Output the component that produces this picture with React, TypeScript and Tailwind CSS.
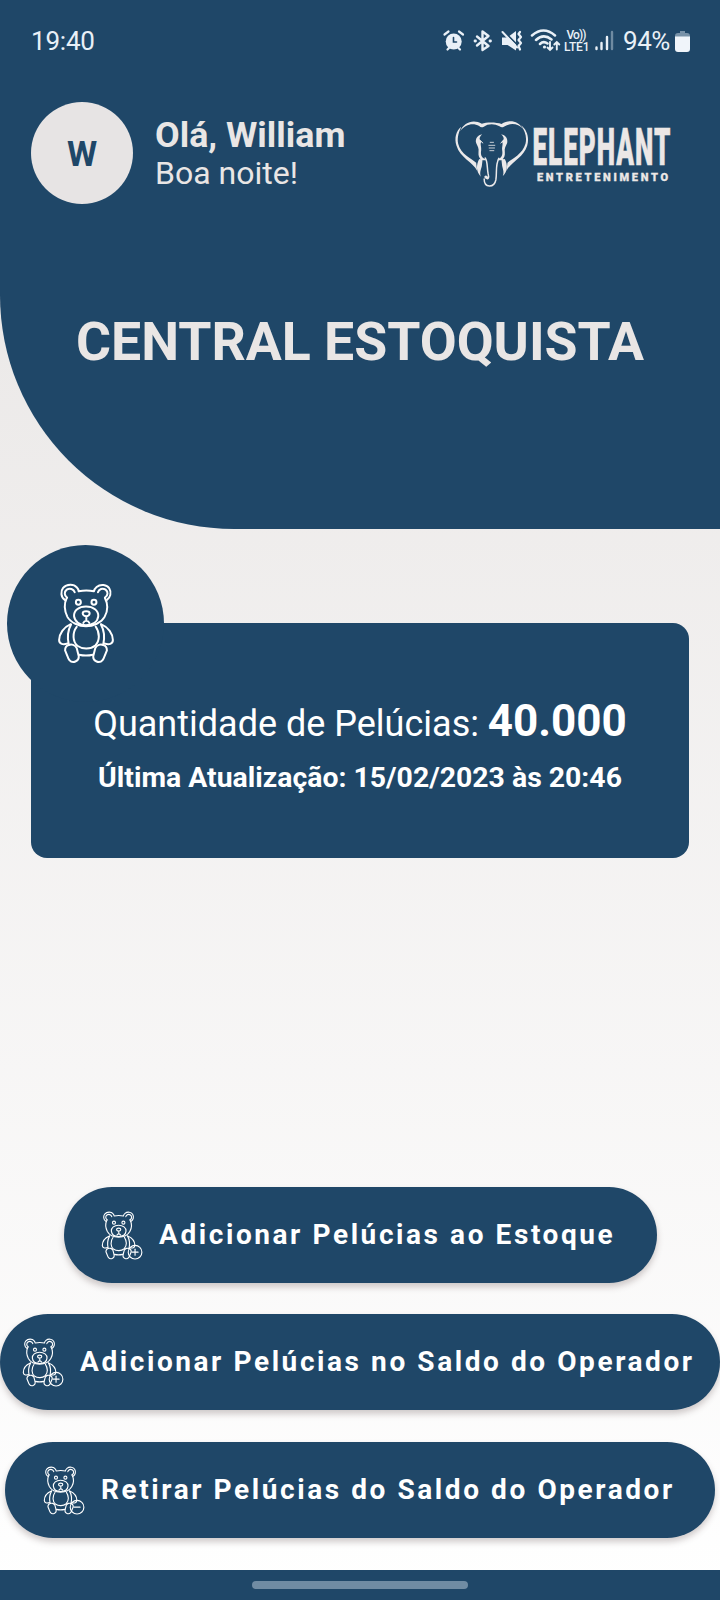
import type { ReactNode } from "react";

type Badge = "plus" | "minus";

function Bear({ badge, className, stroke }: { badge?: Badge; className: string; stroke: number }) {
  return (
    <svg
      viewBox={badge ? "170 158 208 244" : "170 158 174 244"}
      className={className}
      fill="none"
      stroke="#fff"
      strokeWidth={stroke}
      strokeLinecap="round"
      strokeLinejoin="round"
    >
      <path d="M193 209 C181 201 180 183 188 173 C199 160 221 161 229 171 Q234 176 235 183 C249 180 267 180 281 183 Q282 176 289 170 C301 160 320 163 327 174 C335 187 330 202 320 209" />
      <path d="M200 202 C191 196 191 184 199 178 C208 172 220 176 223 186" />
      <path d="M314 202 C324 196 324 184 316 178 C307 172 296 176 293 186" />
      <path d="M199 203 C190 222 193 244 201 260 C211 278 236 288 257 288 C279 288 303 278 313 260 C322 244 324 222 314 203" />
      <circle cx="234" cy="216" r="7.5" />
      <circle cx="281" cy="216" r="7.5" />
      <path d="M221 258 C220 241 235 229 257 229 C279 229 295 241 294 258 C292 275 277 285 257 285 C238 285 223 275 221 258 Z" />
      <path d="M247 249 C247 241 268 241 268 249 C268 255 262 258 258 258 C253 258 247 255 247 249 Z M258 258 V272 M249 278 Q252 272 258 272 Q264 272 267 278" />
      <path d="M211 282 C190 291 176 311 176 330 C176 342 188 345 202 340 M302 282 C324 291 338 311 338 330 C338 342 326 345 312 340" />
      <path d="M212 283 C202 301 201 325 205 343 M302 283 C312 301 313 325 309 343" />
      <path d="M229 290 C215 308 217 335 231 347 C246 358 271 358 285 346 C299 332 299 307 286 289" />
      <path d="M205 345 C212 341 225 344 229 354 L235 378 C237 395 216 401 207 390 Q203 385 201 378 L194 361 Q194 348 205 345 Z" />
      <path d="M309 345 C302 341 289 344 285 354 L279 378 C277 395 298 401 307 390 Q311 385 313 378 L320 361 Q320 348 309 345 Z" />
      <path d="M236 374 Q257 379 278 374" />
      {badge && (
        <>
          <circle cx="339" cy="363" r="34" />
          <path d="M324 363 H354" />
          {badge === "plus" && <path d="M339 348 V378" />}
        </>
      )}
    </svg>
  );
}

function Logo() {
  return (
    <svg viewBox="450 113 226 80" className="h-20 w-[226px] overflow-visible" fill="none">
      <g transform="translate(444.5 110) scale(.33333)" fill="#ebe9ea">
        <path d="M98 182 C84 155 47 143 36 107 C29 84 34 64 50 50 C44 65 37 81 41 101 C49 133 82 146 95 158 Z" />
        <path d="M186 182 C200 155 237 143 248 107 C255 84 248 60 230 46 C241 64 248 80 243 101 C234 133 202 146 189 158 Z" />
        <path d="M47 64 C58 36 87 27 112 41 C126 36 156 36 171 42 C194 27 222 33 236 57 C221 40 198 37 178 50 Q172 54 165 49 C150 40 130 41 118 50 Q110 55 104 48 C85 38 62 43 47 64 Z" />
        <path d="M113 73 C100 75 91 87 95 99 C99 108 104 115 102 127 C101 137 104 146 111 150 L121 147 C110 142 108 133 110 121 C111 107 105 101 112 94 C104 90 102 84 113 73 Z" />
        <path d="M170 73 C183 75 191 87 188 99 C184 108 179 115 181 127 C182 137 179 146 172 150 L162 147 C173 142 175 133 173 121 C172 107 178 101 171 94 C179 90 181 84 170 73 Z" />
        <path d="M104 147 C95 165 94 184 109 200 C105 187 109 180 112 168 L114 151 Z M181 147 C190 165 190 184 175 198 C179 187 176 180 173 168 L171 151 Z" />
      </g>
      <g transform="translate(444.5 110) scale(.33333)" stroke="#ebe9ea" strokeLinecap="round">
        <path d="M122 144 C130 154 127 173 131 192 C135 205 130 209 123 203 C119 200 125 196 128 202 M119 207 C119 235 149 234 154 210 C158 188 152 165 163 145" strokeWidth="4.5" />
        <path d="M109 149 H122 M162 149 H176" strokeWidth="4" />
        <path d="M137 97 H147 M133 106 H151 M134 114 H150 M136 122 H148" strokeWidth="2.5" />
        <path d="M107 92 L115 99 M177 92 L169 99" strokeWidth="3" />
      </g>
      <text x="532.5" y="165" textLength="139" lengthAdjust="spacingAndGlyphs" className="font-[Roboto,sans-serif] text-[52px] font-black tracking-[2px]" fill="#ebe7e6" stroke="#ebe7e6" strokeWidth=".5">
        ELEPHANT
      </text>
      <text x="537" y="181" textLength="131" className="font-[Roboto,sans-serif] text-[11px] font-black" fill="#ebe7e6" stroke="#ebe7e6" strokeWidth=".3">
        ENTRETENIMENTO
      </text>
    </svg>
  );
}

function StatusIcons() {
  return (
    <svg viewBox="440 26 176 30" className="h-[30px] w-[176px]" fill="none" stroke="#e9f0f7" strokeWidth="2" strokeLinecap="round">
      <circle cx="453.7" cy="41.5" r="8" fill="#e9f0f7" stroke="none" />
      <path d="M444.5 34.5 L448.5 31.5 M463 34.5 L459 31.5 M447.5 49.5 L449 48 M460 49.5 L458.5 48" strokeWidth="2.2" />
      <path d="M453.5 37.5 V42 H456.5" stroke="#1f4768" strokeWidth="1.6" />
      <path d="M477 36.5 L488.5 46 L482.5 50 V31.5 L488.5 36 L477 45.5" strokeWidth="2.4" strokeLinejoin="round" />
      <path d="M475 41 H475.5 M490 41 H490.5" strokeWidth="2.8" />
      <path d="M502 37.5 H507.5 L516 31 V50.5 L507.5 45 H502 Z" fill="#e9f0f7" stroke="none" />
      <path d="M504 31.5 L519 46.5" stroke="#1f4768" strokeWidth="1.6" />
      <path d="M502.5 32 L517 47.5" strokeWidth="2" />
      <path d="M520 32 L518.5 34 L521 37 L518.5 40 L521 43 L518.5 46 L520 49.5" strokeWidth="2.2" strokeLinejoin="round" />
      <path d="M532 35.5 Q543.5 25.5 555 35.5 M536 40 Q543.5 33 551.5 39.5 M540 44 Q543.5 40.5 547.5 43.5" strokeWidth="2.5" />
      <circle cx="544.5" cy="47" r="1.6" fill="#e9f0f7" stroke="none" />
      <path d="M550 42 V49.5 M547.5 47.5 L550 50 L552.5 47.5 M556.8 49.5 V42.5 M554.3 44.5 L556.8 42 L559.3 44.5" strokeWidth="1.9" />
      <g fill="#e9f0f7" stroke="none" className="font-[Roboto,sans-serif] text-[12px] font-medium">
        <text x="566.5" y="39" textLength="20">Vo))</text>
        <text x="564" y="51" textLength="25.5">LTE1</text>
      </g>
      <path d="M596.5 47.5 V49 M601.5 43 V49 M607 37 V49" strokeWidth="2.4" />
      <path d="M612 32 V49" stroke="#6f8ba2" strokeWidth="2.4" />
    </svg>
  );
}

function StockButton({ badge, layout, children }: { badge: Badge; layout: string; children: ReactNode }) {
  return (
    <button
      className={`flex h-24 shrink-0 items-center gap-[16px] rounded-full bg-[#1f4768] text-[28px] font-bold tracking-[2.58px] whitespace-nowrap text-white shadow-[0_4px_6px_rgba(70,50,50,0.25)] ${layout}`}
    >
      <Bear badge={badge} stroke={5.6} className="h-[49px] w-[42px] shrink-0" />
      <span>{children}</span>
    </button>
  );
}

export default function App() {
  return (
    <div className="flex h-[1600px] w-[720px] flex-col overflow-hidden bg-linear-to-b from-[#e7e4e3] to-white font-[Roboto,sans-serif]">
      <header className="flex h-[529px] shrink-0 flex-col rounded-bl-[234px] bg-[#1f4768] text-[#e9e6e5]">
        <div className="mt-[26px] flex h-[30px] items-center pr-[30px] pl-[31px] text-[26px] leading-[30px] text-[#e9f0f7]">
          <span className="tracking-[-0.2px]">19:40</span>
          <div className="ml-auto flex items-center">
            <StatusIcons />
            <span className="ml-[7px] tracking-[-0.4px]">94%</span>
            <svg viewBox="0 0 15 21" className="ml-[5px] h-[21px] w-[15px]">
              <path d="M5 0 H10 V2 H12 Q15 2 15 5 V7 H0 V5 Q0 2 3 2 H5 Z" fill="#7892a8" />
              <path d="M0 5.5 H15 V18 Q15 21 12 21 H3 Q0 21 0 18 Z" fill="#f0f5fa" />
            </svg>
          </div>
        </div>
        <div className="mt-[46px] flex h-[102px] items-center pr-[44px] pl-[31px]">
          <div className="flex size-[102px] items-center justify-center rounded-full bg-[#e7e4e4] pt-[3px] text-[34.5px] font-bold text-[#1f4768]">W</div>
          <div className="mt-[1px] ml-[22px] flex flex-col">
            <span className="text-[35.8px] leading-[40px] font-bold">Olá, William</span>
            <span className="text-[32px] leading-[37px]">Boa noite!</span>
          </div>
          <div className="ml-auto">
            <Logo />
          </div>
        </div>
        <h1 className="mt-[107px] text-center text-[53.6px] leading-[62px] font-bold">CENTRAL ESTOQUISTA</h1>
      </header>

      <section className="relative mx-[31px] mt-[94px] flex h-[235px] shrink-0 flex-col items-center rounded-2xl bg-[#1f4768] pt-[71px] text-white">
        <div className="absolute -top-[78px] -left-[24px] flex size-[157px] items-center justify-center rounded-full bg-[#1f4768]">
          <Bear stroke={6} className="h-[81px] w-[58px]" />
        </div>
        <p className="relative text-[36px] leading-[54px] whitespace-nowrap">
          Quantidade de Pelúcias: <b className="text-[44px]">40.000</b>
        </p>
        <p className="relative mt-[9px] text-[28.4px] leading-[36px] font-bold whitespace-nowrap">Última Atualização: 15/02/2023 às 20:46</p>
      </section>

      <main className="mt-auto flex flex-col items-center pb-[32px]">
        <StockButton badge="plus" layout="mb-[31px] w-[593px] pl-[37.5px]">
          Adicionar Pelúcias ao Estoque
        </StockButton>
        <StockButton badge="plus" layout="mb-[32px] w-[720px] pl-[22px]">
          Adicionar Pelúcias no Saldo do Operador
        </StockButton>
        <StockButton badge="minus" layout="w-[710px] pl-[38px]">
          Retirar Pelúcias do Saldo do Operador
        </StockButton>
      </main>
      <nav className="flex h-[30px] shrink-0 items-center justify-center bg-[#1f4768]">
        <div className="h-[8px] w-[216px] rounded-full bg-[#708ca3]" />
      </nav>
    </div>
  );
}
